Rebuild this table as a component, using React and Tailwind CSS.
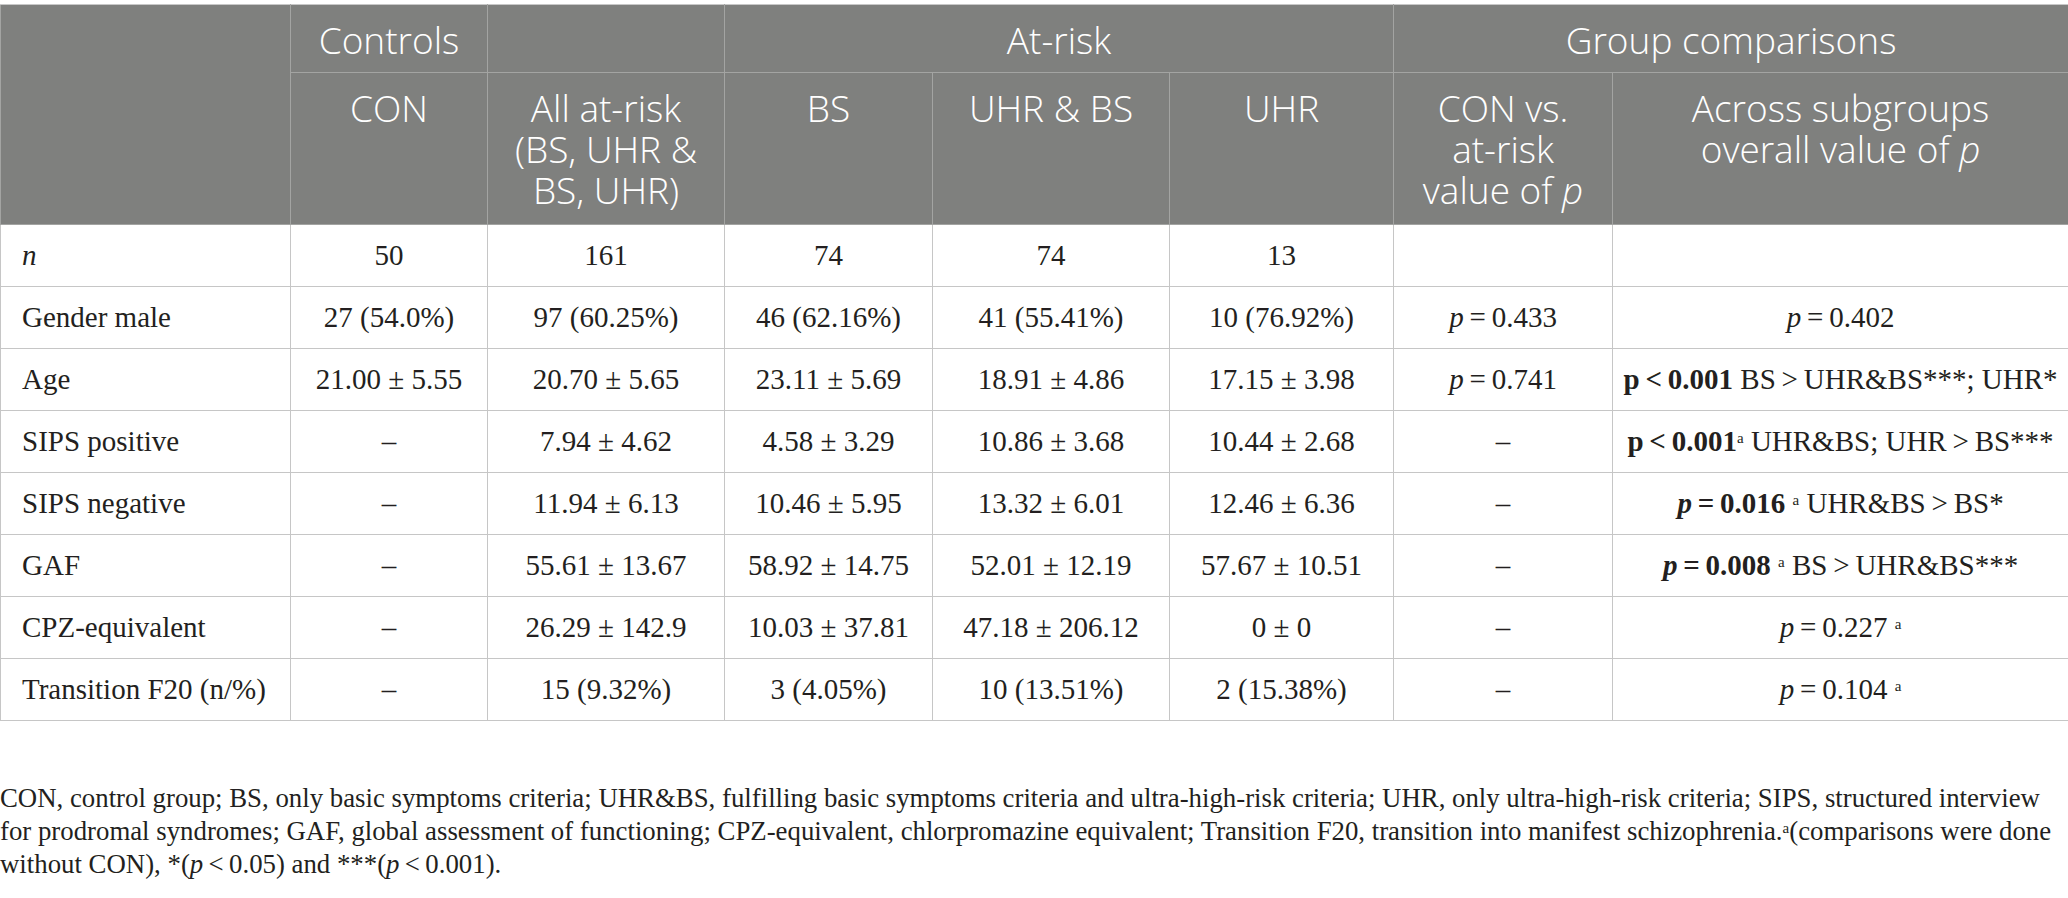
const sp = (s) => `\u2009${s}\u2009`;

const rows = [
  { label: <i>n</i>, cells: ['50', '161', '74', '74', '13', '', ''] },
  {
    label: 'Gender male',
    cells: ['27 (54.0%)', '97 (60.25%)', '46 (62.16%)', '41 (55.41%)', '10 (76.92%)', <><i>p</i>{sp('=')}0.433</>, <><i>p</i>{sp('=')}0.402</>],
  },
  {
    label: 'Age',
    cells: [
      '21.00 ± 5.55', '20.70 ± 5.65', '23.11 ± 5.69', '18.91 ± 4.86', '17.15 ± 3.98',
      <><i>p</i>{sp('=')}0.741</>,
      <><b>p{sp('<')}0.001</b> BS{sp('>')}UHR&amp;BS***; UHR*</>,
    ],
  },
  {
    label: 'SIPS positive',
    cells: [
      '–', '7.94 ± 4.62', '4.58 ± 3.29', '10.86 ± 3.68', '10.44 ± 2.68', '–',
      <><b>p{sp('<')}0.001</b><sup className="text-[15px]">a</sup> UHR&amp;BS; UHR{sp('>')}BS***</>,
    ],
  },
  {
    label: 'SIPS negative',
    cells: [
      '–', '11.94 ± 6.13', '10.46 ± 5.95', '13.32 ± 6.01', '12.46 ± 6.36', '–',
      <><b><i>p</i>{sp('=')}0.016</b> <sup className="text-[15px]">a</sup> UHR&amp;BS{sp('>')}BS*</>,
    ],
  },
  {
    label: 'GAF',
    cells: [
      '–', '55.61 ± 13.67', '58.92 ± 14.75', '52.01 ± 12.19', '57.67 ± 10.51', '–',
      <><b><i>p</i>{sp('=')}0.008</b> <sup className="text-[15px]">a</sup> BS{sp('>')}UHR&amp;BS***</>,
    ],
  },
  {
    label: 'CPZ-equivalent',
    cells: [
      '–', '26.29 ± 142.9', '10.03 ± 37.81', '47.18 ± 206.12', '0 ± 0', '–',
      <><i>p</i>{sp('=')}0.227 <sup className="text-[15px]">a</sup></>,
    ],
  },
  {
    label: 'Transition F20 (n/%)',
    cells: [
      '–', '15 (9.32%)', '3 (4.05%)', '10 (13.51%)', '2 (15.38%)', '–',
      <><i>p</i>{sp('=')}0.104 <sup className="text-[15px]">a</sup></>,
    ],
  },
];

const widths = [290, 197, 237, 208, 237, 224, 219, 456];

export default function App() {
  return (
    <div className="w-[2068px] bg-white pt-[4px] text-[#231f20]">
      <table className="w-full table-fixed border-collapse">
        <colgroup>
          {widths.map((w, i) => (
            <col key={i} style={{ width: w }} />
          ))}
        </colgroup>
        <thead className="bg-[#7f807e] font-['Open_Sans',sans-serif] text-[37px] font-light leading-[41px] text-white">
          <tr className="h-[68px]">
            <th rowSpan={2} className="border border-[#a3a4a2] border-t-[#c8c8c8]" />
            <th className="border border-[#a3a4a2] border-t-[#c8c8c8] pt-[14px] pb-[12px] font-light">Controls</th>
            <th className="border border-[#a3a4a2] border-t-[#c8c8c8]" />
            <th colSpan={3} className="border border-[#a3a4a2] border-t-[#c8c8c8] pt-[14px] pb-[12px] font-light">At-risk</th>
            <th colSpan={2} className="border border-[#a3a4a2] border-t-[#c8c8c8] pt-[14px] pb-[12px] font-light">Group comparisons</th>
          </tr>
          <tr className="h-[152px]">
            <th className="border border-[#a3a4a2] pt-[14px] align-top font-light">CON</th>
            <th className="border border-[#a3a4a2] pt-[14px] align-top font-light whitespace-nowrap">
              All at-risk<br />(BS, UHR &amp;<br />BS, UHR)
            </th>
            <th className="border border-[#a3a4a2] pt-[14px] align-top font-light">BS</th>
            <th className="border border-[#a3a4a2] pt-[14px] align-top font-light whitespace-nowrap">UHR &amp; BS</th>
            <th className="border border-[#a3a4a2] pt-[14px] align-top font-light">UHR</th>
            <th className="border border-[#a3a4a2] pt-[14px] align-top font-light whitespace-nowrap">
              CON vs.<br />at-risk<br />value of <i>p</i>
            </th>
            <th className="border border-[#a3a4a2] pt-[14px] align-top font-light whitespace-nowrap">
              Across subgroups<br />overall value of <i>p</i>
            </th>
          </tr>
        </thead>
        <tbody className="font-['Liberation_Serif',serif] text-[29px]">
          {rows.map((r, i) => (
            <tr key={i} className="h-[62px]">
              <td className="border border-[#c6c6c6] pl-[21px] whitespace-nowrap">{r.label}</td>
              {r.cells.map((c, j) => (
                <td key={j} className="border border-[#c6c6c6] text-center whitespace-nowrap">
                  {c}
                </td>
              ))}
            </tr>
          ))}
        </tbody>
      </table>
      <p className="mt-[61px] font-['Liberation_Serif',serif] text-[26.8px] leading-[33px] whitespace-nowrap">
        CON, control group; BS, only basic symptoms criteria; UHR&amp;BS, fulfilling basic symptoms criteria and ultra-high-risk criteria; UHR, only ultra-high-risk criteria; SIPS, structured interview
        <br />
        for prodromal syndromes; GAF, global assessment of functioning; CPZ-equivalent, chlorpromazine equivalent; Transition F20, transition into manifest schizophrenia.<sup className="text-[15px]">a</sup>(comparisons were done
        <br />
        without CON), *(<i>p</i>{sp('<')}0.05) and ***(<i>p</i>{sp('<')}0.001).
      </p>
    </div>
  );
}
